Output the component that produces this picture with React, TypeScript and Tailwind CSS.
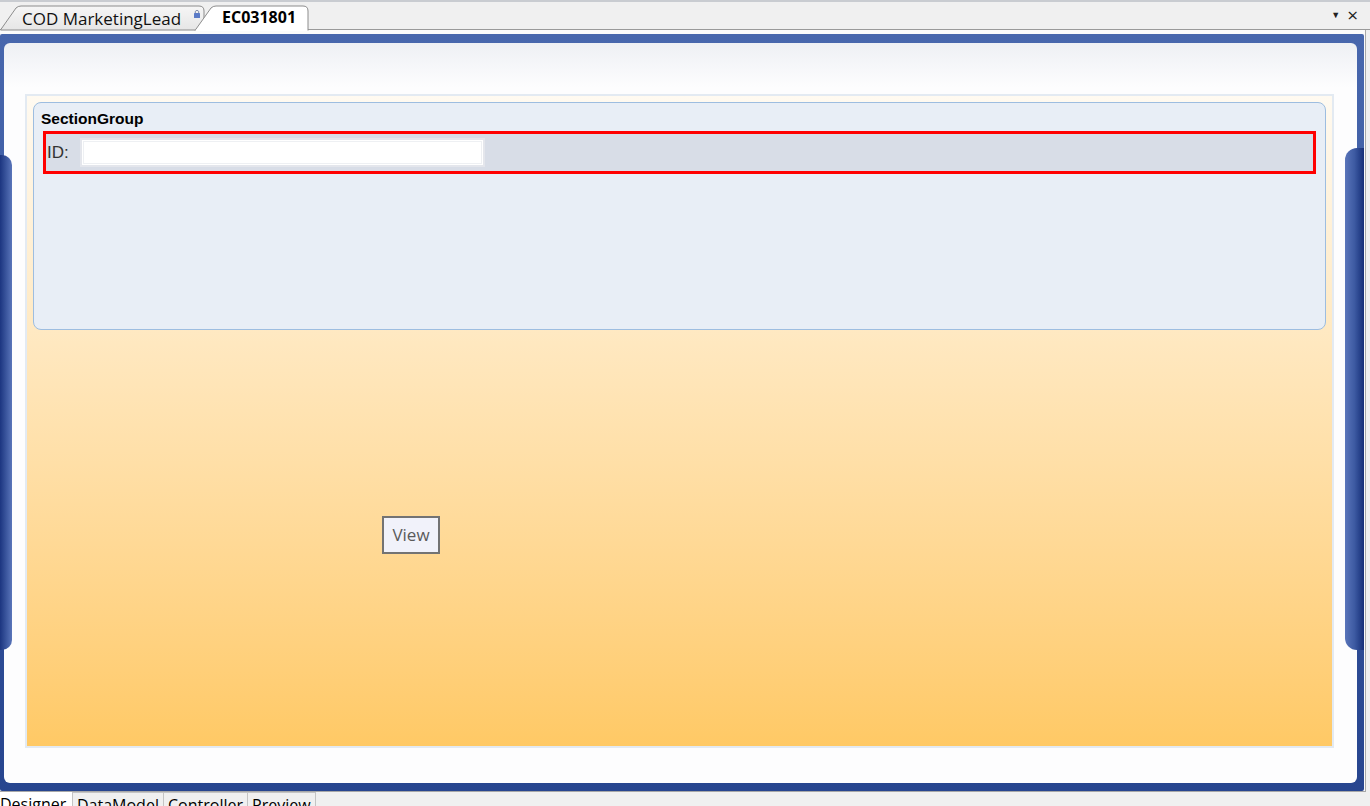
import React from 'react';

export default function App() {
  const bottomTabs = [
    { label: 'DataModel', w: 'w-[91px]' },
    { label: 'Controller', w: 'w-[84px]' },
    { label: 'Preview', w: 'w-[68px]' },
  ];

  return (
    <div className="w-[1370px] h-[806px] bg-[#f0f0f0] overflow-hidden flex flex-col font-['Open_Sans',sans-serif]">
      {/* toolbar remnant */}
      <div className="h-[2px] bg-[#c9ccd1] shrink-0" />

      {/* document tabs */}
      <div className="relative h-[28px] shrink-0 flex items-end border-b border-[#9a9a9a]">
        <svg className="absolute left-0 top-0" width="320" height="29" viewBox="0 0 320 29">
          <defs>
            <linearGradient id="t1" x1="0" y1="0" x2="0" y2="1">
              <stop offset="0" stopColor="#f6f6f6" />
              <stop offset="1" stopColor="#e6e6e6" />
            </linearGradient>
          </defs>
          <path d="M0.5,28 L16,6 Q18,4 21,4 L199,4 Q204,4 204,9 L204,20 L200,28 Z" fill="url(#t1)" stroke="#8c8c8c" />
          <path d="M195,28.5 L211,6 Q213,4 216,4 L303,4 Q308,4 308,9 L308,28.5" fill="#ffffff" stroke="#8c8c8c" />
          <rect x="196" y="27.5" width="111" height="2" fill="#ffffff" />
          {/* lock */}
          <rect x="194" y="11" width="6" height="5" rx="0.5" fill="#5b7bc7" />
          <path d="M195.3,11 V9.3 Q197,7.2 198.7,9.3 V11" fill="none" stroke="#7d8aa8" strokeWidth="1" />
        </svg>
        <div className="relative flex items-end h-full">
          <div className="w-[196px] pl-[22px] text-[17px] leading-[20px] text-[#111] h-[20px] overflow-hidden whitespace-nowrap">
            COD MarketingLead
          </div>
          <div className="pl-[26px] text-[16px] leading-[20px] font-bold text-black h-[22px] whitespace-nowrap">
            EC031801
          </div>
        </div>
        <div className="ml-auto mr-[12px] mb-[5px] flex items-center gap-[7px] text-[#222]">
          <span className="text-[9px]">▼</span>
          <span className="text-[19px] leading-[18px]">×</span>
        </div>
      </div>

      {/* designer host */}
      <div className="h-[762px] shrink-0 w-[1366px] bg-[#fbfbfb] border-r border-b border-[#a8a8a8] pt-[4px] pr-[1px]">
        <div className="relative h-full bg-gradient-to-b from-[#4867ad] to-[#27458f] pt-[9px] pl-[4px] pr-[7px] pb-[8px] rounded-[2px]">
          <div className="relative h-full rounded-[6px] bg-gradient-to-b from-[#eef0f4] via-[#fdfdfe] via-[6%] to-[#fdfdfe] pt-[51px] pl-[21px] pr-[23px] pb-[35px]">
            <div className="h-full border-2 border-[#e3eaf2] bg-gradient-to-b from-[#fffaf1] to-[#ffc965] p-[6px] flex flex-col items-start">
              {/* SectionGroup */}
              <div className="w-full h-[228px] rounded-[8px] border border-[#9dbde0] bg-[#e8eef6] font-['Liberation_Sans',sans-serif]">
                <div className="pl-[7px] pt-[8px] h-[28px] text-[15.5px] font-bold text-black leading-[16px]">
                  SectionGroup
                </div>
                <div className="mx-[9px] h-[43px] border-[3px] border-[#ff0000] bg-[#d8dde7] flex items-center">
                  <span className="pl-[1px] w-[34px] text-[17px] text-[#333]">ID:</span>
                  <div className="w-[405px] h-[29px] bg-white border-2 border-[#e4e6ec] p-[1px]">
                    <div className="h-full border border-[#eef0f3] bg-white" />
                  </div>
                </div>
              </div>

              {/* View button */}
              <button className="mt-[186px] ml-[349px] w-[58px] h-[38px] border-2 border-[#737373] bg-[#f1f2fa] text-[17px] text-[#5a5a5a]">
                View
              </button>
            </div>
          </div>

          {/* side bulges */}
          <div className="absolute z-10 left-0 top-[121px] w-[12px] h-[495px] rounded-r-[10px] bg-gradient-to-r from-[#1c3580] to-[#5a75ba]" />
          <div className="absolute z-10 right-0 top-[114px] w-[19px] h-[502px] rounded-l-[12px] bg-gradient-to-r from-[#5a75ba] via-[#3d5aa2] to-[#162e78]" />
        </div>
      </div>

      {/* bottom tabs */}
      <div className="flex h-[14px] overflow-hidden text-[16px] text-black">
        <div className="w-[72px] bg-white pt-[2px] leading-[20px] whitespace-nowrap">Designer</div>
        {bottomTabs.map((t) => (
          <div key={t.label} className={`${t.w} px-[4px] border-l border-t border-[#c4c4c4] bg-[#f0f0f0] pt-[2px] leading-[20px] whitespace-nowrap`}>
            {t.label}
          </div>
        ))}
        <div className="w-px bg-[#c4c4c4]" />
      </div>
    </div>
  );
}
